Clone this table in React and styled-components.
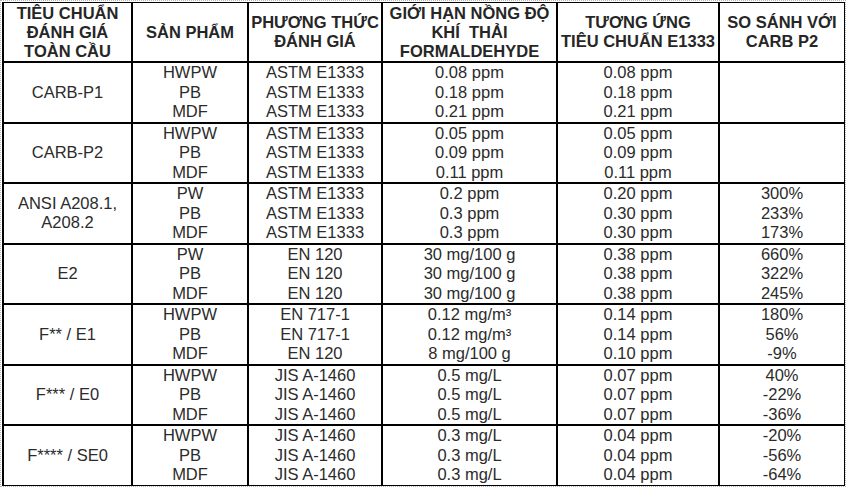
import React from 'react';
import styled, { createGlobalStyle } from 'styled-components';

const GlobalStyle = createGlobalStyle`
  html, body {
    margin: 0;
    padding: 0;
    background: #fff;
  }
  body {
    font-family: 'Liberation Sans', Arial, sans-serif;
    color: #2b2b2b;
  }
`;

const Frame = styled.div`
  width: 846px;
  height: 487px;
  box-sizing: border-box;
  border: 1px dotted #b4b4b4;
  padding: 1px;
  overflow: hidden;
`;

const Table = styled.table`
  width: 842px;
  table-layout: fixed;
  border-collapse: collapse;
  border-top: 1px solid #000;
  border-left: 1px solid #000;
`;

const HeadCell = styled.th`
  height: 58px;
  padding: 0 1px;
  border: 2px solid #000;
  border-top-width: 1px;
  font-size: 16.5px;
  line-height: 19px;
  font-weight: bold;
  text-align: center;
  vertical-align: middle;
  white-space: pre;
  color: #262626;
`;

const Cell = styled.td`
  height: 58px;
  padding: 0 1px;
  border: 2px solid #000;
  font-size: 16.5px;
  line-height: 19.5px;
  text-align: center;
  vertical-align: middle;
  white-space: nowrap;
`;

const Line = styled.div`
  height: 19.5px;
`;

const widths = [129, 116, 134, 175, 162, 126];

const headers = [
  'TIÊU CHUẨN\nĐÁNH GIÁ\nTOÀN CẦU',
  'SẢN PHẨM',
  'PHƯƠNG THỨC\nĐÁNH GIÁ',
  'GIỚI HẠN NỒNG ĐỘ\nKHÍ  THẢI\nFORMALDEHYDE',
  'TƯƠNG ỨNG\nTIÊU CHUẨN E1333',
  'SO SÁNH VỚI\nCARB P2',
];

const groups = [
  {
    name: ['CARB-P1'],
    products: ['HWPW', 'PB', 'MDF'],
    methods: ['ASTM E1333', 'ASTM E1333', 'ASTM E1333'],
    limits: ['0.08 ppm', '0.18 ppm', '0.21 ppm'],
    e1333: ['0.08 ppm', '0.18 ppm', '0.21 ppm'],
    compare: [],
  },
  {
    name: ['CARB-P2'],
    products: ['HWPW', 'PB', 'MDF'],
    methods: ['ASTM E1333', 'ASTM E1333', 'ASTM E1333'],
    limits: ['0.05 ppm', '0.09 ppm', '0.11 ppm'],
    e1333: ['0.05 ppm', '0.09 ppm', '0.11 ppm'],
    compare: [],
  },
  {
    name: ['ANSI A208.1,', 'A208.2'],
    products: ['PW', 'PB', 'MDF'],
    methods: ['ASTM E1333', 'ASTM E1333', 'ASTM E1333'],
    limits: ['0.2 ppm', '0.3 ppm', '0.3 ppm'],
    e1333: ['0.20 ppm', '0.30 ppm', '0.30 ppm'],
    compare: ['300%', '233%', '173%'],
  },
  {
    name: ['E2'],
    products: ['PW', 'PB', 'MDF'],
    methods: ['EN 120', 'EN 120', 'EN 120'],
    limits: ['30 mg/100 g', '30 mg/100 g', '30 mg/100 g'],
    e1333: ['0.38 ppm', '0.38 ppm', '0.38 ppm'],
    compare: ['660%', '322%', '245%'],
  },
  {
    name: ['F** / E1'],
    products: ['HWPW', 'PB', 'MDF'],
    methods: ['EN 717-1', 'EN 717-1', 'EN 120'],
    limits: ['0.12 mg/m³', '0.12 mg/m³', '8 mg/100 g'],
    e1333: ['0.14 ppm', '0.14 ppm', '0.10 ppm'],
    compare: ['180%', '56%', '-9%'],
  },
  {
    name: ['F*** / E0'],
    products: ['HWPW', 'PB', 'MDF'],
    methods: ['JIS A-1460', 'JIS A-1460', 'JIS A-1460'],
    limits: ['0.5 mg/L', '0.5 mg/L', '0.5 mg/L'],
    e1333: ['0.07 ppm', '0.07 ppm', '0.07 ppm'],
    compare: ['40%', '-22%', '-36%'],
  },
  {
    name: ['F**** / SE0'],
    products: ['HWPW', 'PB', 'MDF'],
    methods: ['JIS A-1460', 'JIS A-1460', 'JIS A-1460'],
    limits: ['0.3 mg/L', '0.3 mg/L', '0.3 mg/L'],
    e1333: ['0.04 ppm', '0.04 ppm', '0.04 ppm'],
    compare: ['-20%', '-56%', '-64%'],
  },
];

const Lines = ({ items }) => (
  <>
    {items.map((t, i) => (
      <Line key={i}>{t}</Line>
    ))}
  </>
);

export default function App() {
  return (
    <>
      <GlobalStyle />
      <Frame>
        <Table>
          <colgroup>
            {widths.map((w, i) => (
              <col key={i} style={{ width: w }} />
            ))}
          </colgroup>
          <thead>
            <tr>
              {headers.map(h => (
                <HeadCell key={h}>{h}</HeadCell>
              ))}
            </tr>
          </thead>
          <tbody>
            {groups.map(g => (
              <tr key={g.name[0]}>
                <Cell>
                  <Lines items={g.name} />
                </Cell>
                <Cell>
                  <Lines items={g.products} />
                </Cell>
                <Cell>
                  <Lines items={g.methods} />
                </Cell>
                <Cell>
                  <Lines items={g.limits} />
                </Cell>
                <Cell>
                  <Lines items={g.e1333} />
                </Cell>
                <Cell>
                  <Lines items={g.compare} />
                </Cell>
              </tr>
            ))}
          </tbody>
        </Table>
      </Frame>
    </>
  );
}
